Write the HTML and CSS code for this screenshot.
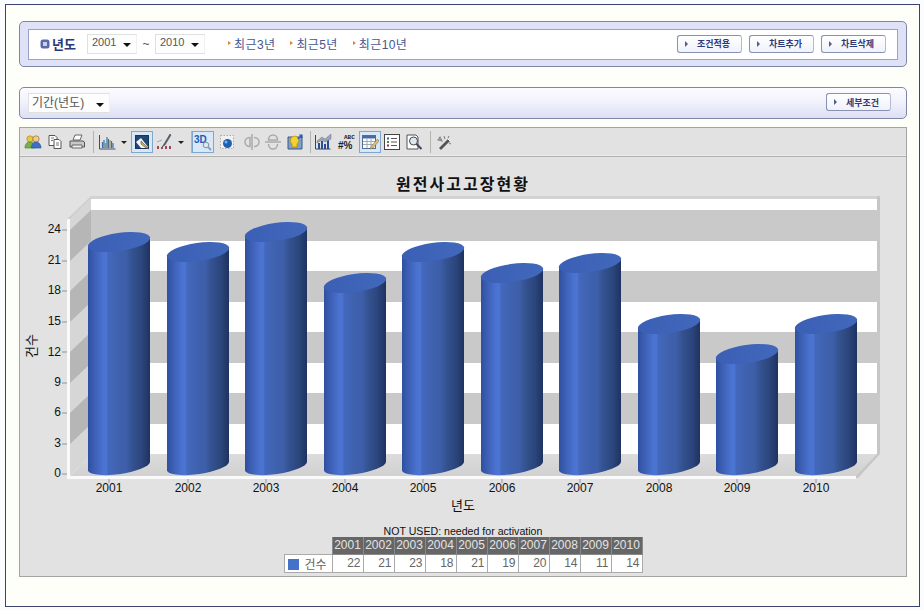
FILE: index.html
```html
<!DOCTYPE html>
<html lang="ko">
<head>
<meta charset="utf-8">
<title>원전사고고장현황</title>
<link rel="stylesheet" href="styles.css">
</head>
<body>
<div class="frame">
  <section class="panel panel-filter">
    <div class="filter-inner">
      <svg class="bullet" width="10" height="10" viewBox="0 0 10 10"><rect x="0.5" y="0.5" width="9" height="9" rx="2.5" fill="#5a6aa8"/><rect x="3" y="3" width="4" height="4" fill="#c8d0ee"/></svg>
      <strong class="filter-title">년도</strong>
      <div class="select select-year"><span>2001</span><i class="caret"></i></div>
      <span class="tilde">~</span>
      <div class="select select-year"><span>2010</span><i class="caret"></i></div>
      <nav class="quick">
        <a class="quick-link">최근3년</a>
        <a class="quick-link">최근5년</a>
        <a class="quick-link">최근10년</a>
      </nav>
      <div class="actions">
        <button class="btn">조건적용</button>
        <button class="btn">차트추가</button>
        <button class="btn">차트삭제</button>
      </div>
    </div>
  </section>

  <section class="panel panel-period">
    <div class="select select-period"><span>기간(년도)</span><i class="caret"></i></div>
    <button class="btn">세부조건</button>
  </section>

  <section class="chart-panel">
    <div class="toolbar">
      <span class="tool"><svg viewBox="0 0 18 18"><circle cx="6" cy="6" r="3.2" fill="#e8c840" stroke="#a08020" stroke-width=".6"/><path d="M1 15c0-4 2-6 5-6s5 2 5 6z" fill="#78b048" stroke="#4a7a28" stroke-width=".6"/><circle cx="12" cy="6" r="3.2" fill="#f0c890" stroke="#806030" stroke-width=".6"/><path d="M7.500 15c0-4 2-6 4.500-6s5 2 5 6z" fill="#3c70c8" stroke="#244c90" stroke-width=".6"/></svg></span>
      <span class="tool"><svg viewBox="0 0 18 18"><path d="M3 2.500h6l2 2v8H3z" fill="#fff" stroke="#555"/><path d="M8 6.500h5l2 2v7H8z" fill="#fff" stroke="#555"/><path d="M5 5h3M5 7.500h2M10 10h3M10 12h3" stroke="#777"/></svg></span>
      <span class="tool"><svg viewBox="0 0 18 18"><path d="M5 7l2-5h7l-2 5z" fill="#fff" stroke="#666"/><path d="M2 8h13l1.500 1v5H2z" fill="#c8c8c8" stroke="#555"/><path d="M4 12h10v3H4z" fill="#f0f0f0" stroke="#666"/></svg></span>
      <i class="sep"></i>
      <span class="tool tool-first"><svg viewBox="0 0 18 18"><path d="M1.500 2v14h16" fill="none" stroke="#3a4f70"/><path d="M4.500 9v6M6 7v8M9 4v11M10.500 6v9M13.500 8v7M15 10v5" stroke="#3f6f9f" stroke-width="1.200"/><path d="M7.500 10v5M12 7v8" stroke="#a09050" stroke-width="1.200"/></svg></span>
      <i class="mini-caret"></i>
      <span class="tool tool-on"><svg viewBox="0 0 18 18"><rect x="2.500" y="2.500" width="13" height="13" fill="#1f4878" stroke="#173658"/><path d="M3 9l5-4 7 9v1H8z" fill="#f4f4f4"/><path d="M8 8l8 8-3-1-5-4z" fill="#e0b040" stroke="#333" stroke-width=".5"/></svg></span>
      <span class="tool"><svg viewBox="0 0 18 18"><path d="M15 1l-6 10-2 3 3-2 6-10z" fill="#5a6c8c" stroke="#333" stroke-width=".5"/><path d="M2 9l5-2" stroke="#9ab" /><path d="M2 13h2v3H2zM6 14h2v2H6zM10 13h2v3h-2zM14 13h2v3h-2z" fill="#a04858"/></svg></span>
      <i class="mini-caret"></i>
      <i class="sep sep-narrow"></i>
      <span class="tool tool-on tool-gap-1"><svg viewBox="0 0 18 18"><text class="tool-3d" x="0" y="10">3D</text><circle cx="12" cy="12" r="2.800" fill="#dce8f4" stroke="#8090a0"/><path d="M14 14l3 3" stroke="#90a0b0" stroke-width="2"/></svg></span>
      <span class="tool tool-wide"><svg viewBox="0 0 18 18"><rect x="2.500" y="2.500" width="13" height="13" fill="#f0f0f0" stroke="#aaa" stroke-dasharray="1.500 1.500"/><circle cx="9.500" cy="10.500" r="4.500" fill="#1f5fb0"/><circle cx="8" cy="9" r="1.500" fill="#7ab0e8"/></svg></span>
      <span class="tool tool-wide tool-tight"><svg viewBox="0 0 18 18"><path d="M9 1v16" stroke="#aaa" stroke-width="1.500"/><path d="M7 4.500C4 4.500 2 6.500 2 9s2 4.500 5 4.500zM11 4.500c3 0 5 2 5 4.500s-2 4.500-5 4.500" fill="none" stroke="#aaa" stroke-width="1.500"/></svg></span>
      <span class="tool"><svg viewBox="0 0 18 18"><path d="M1 9h16" stroke="#aaa" stroke-width="1.500"/><path d="M4.500 7C4.500 4 6.500 2 9 2s4.500 2 4.500 5zM4.500 11c0 3 2 5 4.500 5s4.500-2 4.500-5" fill="none" stroke="#aaa" stroke-width="1.500"/></svg></span>
      <span class="tool"><svg viewBox="0 0 18 18"><path d="M2 4h14v12H2z" fill="#7fa0c8" stroke="#3a5a88"/><path d="M9 3a4.500 4.500 0 0 0-3 8v3h5v-3a4.500 4.500 0 0 0-2-8z" fill="#f4d030" stroke="#b08818" stroke-width=".6"/><path d="M12 6l4-4M13 2h3v3" stroke="#2a58a8" stroke-width="1.200" fill="none"/></svg></span>
      <i class="sep sep-mid"></i>
      <span class="tool tool-gap"><svg viewBox="0 0 18 18"><path d="M1.500 2v14h15" fill="none" stroke="#444"/><path d="M4 10h2v6H4zM7 8h2v8H7zM10 11h2v5h-2zM13 7h2v9h-2z" fill="#284e98"/><path d="M3 8l5-4 3 2 6-5v5l-6 3-3-2-5 3z" fill="#9aa4b4" stroke="#667" stroke-width=".4"/></svg></span>
      <span class="tool tool-gap-1"><svg viewBox="0 0 18 18"><text class="tool-abc" x="6" y="6">ABC</text><text class="tool-num" x="0" y="16">#%</text></svg></span>
      <span class="tool tool-on"><svg viewBox="0 0 18 18"><rect x="1.500" y="2.500" width="13" height="13" fill="#fff" stroke="#5a6c90"/><path d="M1.500 3h13v2.500h-13z" fill="#4868a8"/><path d="M2 8.500h12M2 11.500h12M6 6v9M10 6v9" stroke="#9ab"/><path d="M16.500 6l-6 7-1.500 3 3-1 6-7z" fill="#e8c060" stroke="#665" stroke-width=".5"/></svg></span>
      <span class="tool"><svg viewBox="0 0 18 18"><rect x="1.500" y="1.500" width="15" height="15" fill="#fff" stroke="#444"/><path d="M4 4.500h2v2H4z" fill="#2a60a8"/><path d="M4 8h2v2H4z" fill="#488838"/><path d="M4 11.500h2v2H4z" fill="#a03030"/><path d="M8 5.500h6M8 9h6M8 12.500h6" stroke="#555"/></svg></span>
      <span class="tool"><svg viewBox="0 0 18 18"><path d="M2 2h9l2 2v12H2z" fill="#fff" stroke="#555"/><circle cx="8.500" cy="8" r="4" fill="#dfe8f0" stroke="#445"/><path d="M11.500 11l5 5" stroke="#445" stroke-width="2"/></svg></span>
      <i class="sep sep-wide"></i>
      <span class="tool"><svg viewBox="0 0 18 18"><path d="M3 15L12 6l2 2-9 9z" fill="#555"/><path d="M4 4l2 4-4-1zM8 3l1 3M13 3l-1 2M15 11l-2-1" stroke="#888" stroke-width="1.100" fill="#aaa"/><path d="M12 6l2 2" stroke="#fff"/></svg></span>
    </div>

    <div class="chart-body">
      <svg class="plot" viewBox="20 157 886 368" width="886" height="368">
        <defs>
          <linearGradient id="barGrad" x1="0" y1="0" x2="1" y2="0">
            <stop offset="0" stop-color="#2f50a0"/>
            <stop offset=".08" stop-color="#3a5cb0"/>
            <stop offset=".24" stop-color="#4a72d0"/>
            <stop offset=".3" stop-color="#4c74d2"/>
            <stop offset=".32" stop-color="#4468bc"/>
            <stop offset=".5" stop-color="#3f61ae"/>
            <stop offset=".62" stop-color="#3d5ea8"/>
            <stop offset=".72" stop-color="#34528f"/>
            <stop offset=".86" stop-color="#2c467e"/>
            <stop offset="1" stop-color="#1f3360"/>
          </linearGradient>
          <linearGradient id="capGrad" x1="0" y1="0" x2="1" y2="0">
            <stop offset="0" stop-color="#3a5fb4"/>
            <stop offset="1" stop-color="#4268bc"/>
          </linearGradient>
          <linearGradient id="floorGrad" x1="0" y1="0" x2="0" y2="1">
            <stop offset="0" stop-color="#dcdcdc"/>
            <stop offset="1" stop-color="#d0d0d0"/>
          </linearGradient>
        </defs>

        <path class="frame-top" d="M91 196h789v3H91z"/>
        <path class="frame-left" d="M67 219l24-23v3l-21 20z"/>
        <rect class="wall-white" x="91" y="199" width="786" height="255"/>
        <path class="frame-right" d="M877 196h3v258h-3z"/>
        <g class="wall-band">
          <rect x="91" y="210" width="789" height="31"/>
          <rect x="91" y="271" width="789" height="31"/>
          <rect x="91" y="332" width="789" height="31"/>
          <rect x="91" y="393" width="789" height="31"/>
        </g>
        <path class="side-light" d="M70 219l21-20v255l-21 22z"/>
        <g class="side-band">
          <path d="M70 230l21-20v31l-21 20z"/>
          <path d="M70 291l21-20v31l-21 20z"/>
          <path d="M70 352l21-20v31l-21 20z"/>
          <path d="M70 413l21-20v31l-21 20z"/>
        </g>
        <path class="floor" d="M91 454h787l-22 23H70z"/>
        <path class="frame-right" d="M877 454h3l-22 24h-2v-2z"/>
        <path class="axis-white" d="M67 219h3v257h786v3H67z"/>
        <path class="ticks" d="M62 230h5M62 261h5M62 291h5M62 322h5M62 352h5M62 383h5M62 413h5M62 444h5M62 474h5M109 479v4M188 479v4M266 479v4M345 479v4M423 479v4M502 479v4M580 479v4M659 479v4M737 479v4M816 479v4"/>

        <g class="bars">
          <path d="M88 247V471A31.500 8.500 -8 0 0 150 462V237Z"/><ellipse cx="119" cy="242" rx="31.500" ry="9" transform="rotate(-8 119 242)"/>
          <path d="M167 257V471A31.500 8.500 -8 0 0 229 462V247Z"/><ellipse cx="198" cy="252" rx="31.500" ry="9" transform="rotate(-8 198 252)"/>
          <path d="M245 237V471A31.500 8.500 -8 0 0 307 462V227Z"/><ellipse cx="276" cy="232" rx="31.500" ry="9" transform="rotate(-8 276 232)"/>
          <path d="M324 288V471A31.500 8.500 -8 0 0 386 462V278Z"/><ellipse cx="355" cy="283" rx="31.500" ry="9" transform="rotate(-8 355 283)"/>
          <path d="M402 257V471A31.500 8.500 -8 0 0 464 462V247Z"/><ellipse cx="433" cy="252" rx="31.500" ry="9" transform="rotate(-8 433 252)"/>
          <path d="M481 278V471A31.500 8.500 -8 0 0 543 462V268Z"/><ellipse cx="512" cy="273" rx="31.500" ry="9" transform="rotate(-8 512 273)"/>
          <path d="M559 268V471A31.500 8.500 -8 0 0 621 462V258Z"/><ellipse cx="590" cy="263" rx="31.500" ry="9" transform="rotate(-8 590 263)"/>
          <path d="M638 329V471A31.500 8.500 -8 0 0 700 462V319Z"/><ellipse cx="669" cy="324" rx="31.500" ry="9" transform="rotate(-8 669 324)"/>
          <path d="M716 359V471A31.500 8.500 -8 0 0 778 462V349Z"/><ellipse cx="747" cy="354" rx="31.500" ry="9" transform="rotate(-8 747 354)"/>
          <path d="M795 329V471A31.500 8.500 -8 0 0 857 462V319Z"/><ellipse cx="826" cy="324" rx="31.500" ry="9" transform="rotate(-8 826 324)"/>
        </g>

        <text class="chart-title" x="463" y="190">원전사고고장현황</text>
        <g class="y-labels">
          <text x="61" y="233">24</text><text x="61" y="264">21</text><text x="61" y="294">18</text><text x="61" y="325">15</text><text x="61" y="356">12</text><text x="61" y="386">9</text><text x="61" y="416">6</text><text x="61" y="447">3</text><text x="61" y="477">0</text>
        </g>
        <g class="x-labels">
          <text x="109" y="492">2001</text><text x="188" y="492">2002</text><text x="266" y="492">2003</text><text x="345" y="492">2004</text><text x="423" y="492">2005</text><text x="502" y="492">2006</text><text x="580" y="492">2007</text><text x="659" y="492">2008</text><text x="737" y="492">2009</text><text x="816" y="492">2010</text>
        </g>
        <text class="axis-name" x="463" y="510">년도</text>
        <text class="axis-name" transform="translate(36 346) rotate(-90)">건수</text>
      </svg>

      <p class="note">NOT USED: needed for activation</p>
      <table class="data-table">
        <thead>
          <tr><th class="blank"></th><th>2001</th><th>2002</th><th>2003</th><th>2004</th><th>2005</th><th>2006</th><th>2007</th><th>2008</th><th>2009</th><th>2010</th></tr>
        </thead>
        <tbody>
          <tr><td class="legend"><span class="swatch"></span>건수</td><td>22</td><td>21</td><td>23</td><td>18</td><td>21</td><td>19</td><td>20</td><td>14</td><td>11</td><td>14</td></tr>
        </tbody>
      </table>
    </div>
  </section>
</div>
</body>
</html>
```
FILE: styles.css
```css
* { box-sizing: border-box; }
html, body { margin: 0; padding: 0; background: #fbfcff; }
body { width: 924px; height: 610px; overflow: hidden; font-family: "Liberation Sans", "Noto Sans CJK KR", sans-serif; }

.frame {
  width: 915px;
  height: 603px;
  margin: 4px 0 0 5px;
  padding: 16px 12px 0 13px;
  background: #fffffa;
  border: 1px solid #3c4270;
  display: flex;
  flex-direction: column;
}

.panel { width: 888px; border: 1px solid #7f86a6; border-radius: 5px; }

.panel-filter { height: 46px; padding: 7px 8px 6px 8px; background: #dfe2f6; }
.filter-inner {
  height: 31px;
  background: #fff;
  border: 1px solid #9aa2c6;
  display: flex;
  align-items: center;
  padding: 0 11px 2px;
}
.bullet { flex: none; margin: 1px 2px 0 0; }
.filter-title { width: 24px; margin-right: 11px; font-size: 13px; color: #2b3a78; white-space: nowrap; }

.select {
  height: 20px;
  background: #fdfdfd;
  border: 1px solid #e0e0e0;
  border-right-color: #f0f0f0;
  display: flex;
  align-items: center;
  justify-content: space-between;
  padding: 0 5px 0 4px;
  font-size: 11px;
  color: #555;
  flex: none;
}
.select span { margin-bottom: 3px; }
.select-year { width: 50px; }
.select-period { width: 82px; height: 20px; padding-left: 3px; font-size: 12px; background: #fdfdfe; }
.caret { width: 0; height: 0; border: 4px solid transparent; border-top: 4px solid #111; border-bottom: 0; margin-top: 3px; }
.tilde { width: 18px; text-align: center; font-size: 12px; color: #555; flex: none; }

.quick { display: flex; margin-left: 24px; gap: 16px; }
.quick-link { position: relative; font-size: 12px; letter-spacing: .4px; color: #44578f; white-space: nowrap; padding-left: 5px; }
.quick-link::before {
  content: "";
  position: absolute;
  left: -1px;
  top: 6px;
  border: 2px solid transparent;
  border-left: 3px solid #e08030;
  border-right: 0;
}

.actions { margin-left: auto; display: flex; gap: 7px; }
.btn {
  position: relative;
  width: 65px;
  height: 18px;
  padding: 0 0 0 8px;
  background: linear-gradient(#fff, #f0f2fb);
  border: 1px solid #8a92b4;
  border-right-color: #b4bad2;
  border-radius: 3px;
  font-family: "Noto Sans CJK KR", sans-serif;
  font-size: 9px;
  font-weight: 700;
  line-height: 15px;
  color: #2f3a78;
}
.btn::before {
  content: "";
  position: absolute;
  left: 7px;
  top: 5px;
  border: 3px solid transparent;
  border-left: 3px solid #555a88;
  border-right: 0;
}

.panel-period {
  height: 32px;
  margin-top: 20px;
  padding: 5px 15px 0 8px;
  background: linear-gradient(#fbfbff, #f4f5fd 35%, #dde0f4);
  display: flex;
  justify-content: space-between;
  align-items: flex-start;
}

.chart-panel {
  width: 888px;
  height: 450px;
  margin-top: 8px;
  border: 1px solid #a4a4a4;
  background: #e2e2e2;
}
.toolbar {
  height: 29px;
  display: flex;
  align-items: center;
  padding-left: 2px;
  background: #e2e2e2;
  border-bottom: 1px solid #b0b0b0;
  box-shadow: inset 0 -1px 0 #ececec;
}
.tool { width: 22px; height: 22px; flex: none; display: flex; align-items: center; justify-content: center; border: 1px solid transparent; }
.tool svg { width: 18px; height: 18px; display: block; }
.tool-on { background: #d8e8f6; border-color: #7ea8d0; }
.tool-first { margin-left: 1px; }
.tool-wide { margin-left: 1px; margin-right: 2px; }
.tool-tight { margin-right: -1px; }
.tool-gap { margin-right: 2px; }
.tool-gap-1 { margin-right: 1px; }
.sep { width: 1px; height: 22px; background: #b4b4b4; margin: 0 1px 0 5px; flex: none; }
.sep-narrow { margin: 0 0 0 3px; }
.sep-mid { margin: 0 1px 0 4px; }
.sep-wide { margin: 0 3px 0 5px; }
.mini-caret { width: 0; height: 0; border: 3px solid transparent; border-top: 3px solid #222; border-bottom: 0; margin: 0 4px 0 3px; flex: none; }

.tool-3d { font: 700 10px "Liberation Sans", sans-serif; fill: #1f5ab8; }
.tool-abc { font: 700 6px "Liberation Mono", monospace; fill: #222; }
.tool-num { font: 700 10px "Liberation Sans", sans-serif; fill: #222; }

.chart-body { display: flex; flex-direction: column; align-items: center; }
.plot { display: block; flex: none; }
.frame-top { fill: #d2d2d2; }
.frame-left { fill: #cfcfcf; }
.frame-right { fill: #c6c6c6; }
.wall-white { fill: #fff; }
.wall-band rect { fill: #c9c9c9; }
.side-light { fill: #d6d6d6; }
.side-band path { fill: #b6b6b6; }
.floor { fill: url(#floorGrad); }
.axis-white { fill: #fafafa; }
.ticks { stroke: #8a94a8; stroke-width: 1; fill: none; }
.bars path { fill: url(#barGrad); }
.bars ellipse { fill: url(#capGrad); }
.chart-title { font: 700 16px "Noto Sans CJK KR", sans-serif; letter-spacing: 2px; text-anchor: middle; fill: #111; }
.y-labels text { font: 12px "Liberation Sans", sans-serif; text-anchor: end; fill: #111; }
.x-labels text { font: 12px "Liberation Sans", sans-serif; text-anchor: middle; fill: #111; }
.axis-name { font: 13px "Noto Sans CJK KR", sans-serif; text-anchor: middle; fill: #111; }

.note { margin: 0; height: 12px; font-size: 10.600px; line-height: 12px; color: #111; text-align: center; }

.data-table { border-collapse: collapse; table-layout: fixed; width: 359px; font-size: 12px; }
.data-table th {
  height: 17px;
  padding: 0;
  background: #666;
  border: 1px solid #8a8a8a;
  border-top: 0;
  color: #e4e4e4;
  font-weight: 400;
  text-align: center;
}
.data-table th.blank { width: 48px; background: transparent; border: 0; }
.data-table td {
  height: 18px;
  padding: 0 2px 0 0;
  background: #fff;
  border: 1px solid #aaa;
  color: #666;
  text-align: right;
}
.data-table td.legend { padding: 0; text-align: left; font-family: "Noto Sans CJK KR", sans-serif; font-size: 12px; white-space: nowrap; }
.swatch { display: inline-block; width: 11px; height: 11px; margin: 0 6px 0 3px; background: #4472c8; vertical-align: -1px; }
```
